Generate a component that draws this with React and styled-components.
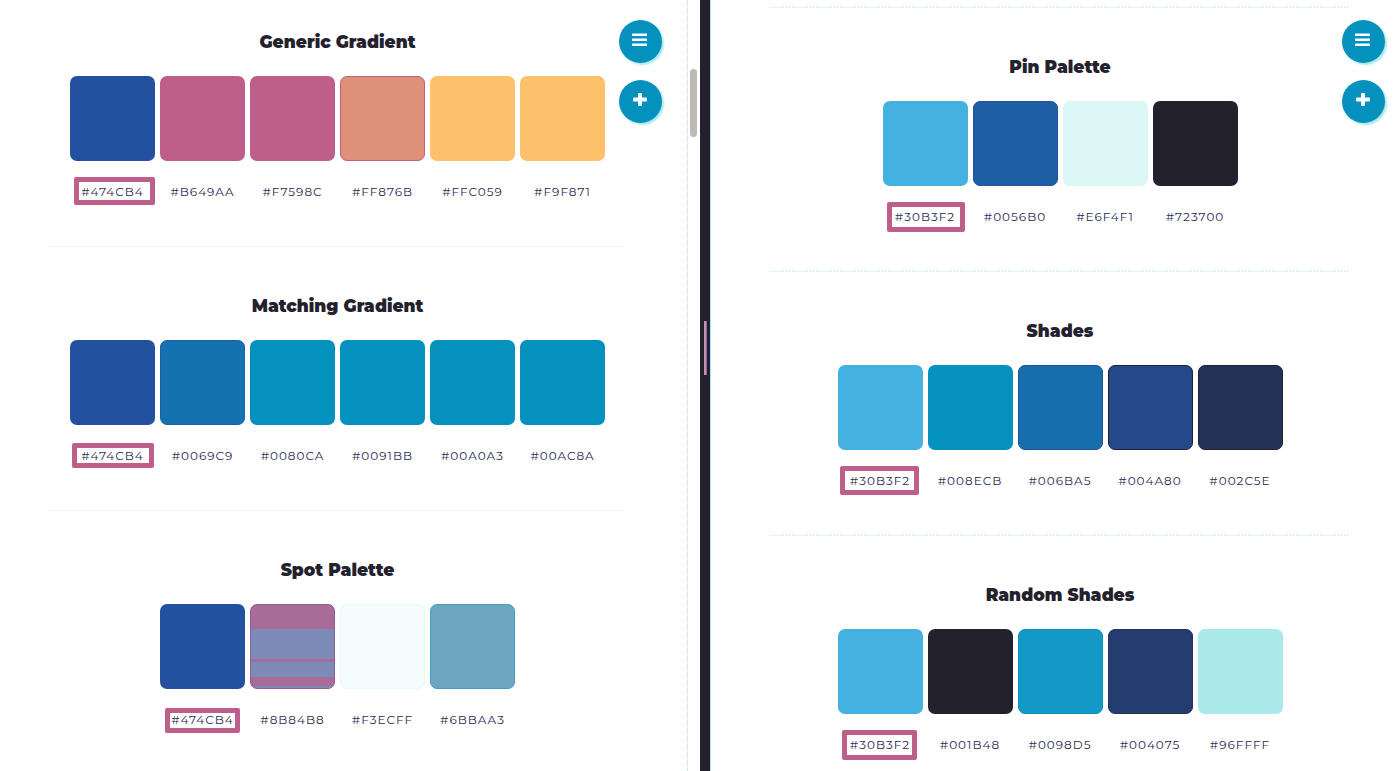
import React from "react";
import styled, { createGlobalStyle } from "styled-components";

const color = {
  ink: "#23212e",
  navy: "#24519f",
  pink: "#be5e8b",
  orange: "#fec16b",
  teal: "#0491be",
  sky: "#45b1e0",
  mist: "#a9e9ea",
};

const GlobalStyle = createGlobalStyle`
  *, *::before, *::after { box-sizing: border-box; }
  body { margin: 0; background: #fff; }
`;

const Split = styled.main`
  display: grid;
  grid-template-columns: 50% 11px minmax(0, 1fr);
  height: 100vh;
  overflow: hidden;
  background: #fff;
  color: ${color.ink};
  font-family: Montserrat, Inter, "Liberation Sans", sans-serif;
`;

const Pane = styled.div`
  position: relative;
  display: flex;
  min-width: 0;
  overflow: hidden;
`;

const Content = styled.div`
  flex: 1;
  min-width: 0;
  padding: ${(p) => p.$padding};
`;

const Rule = styled.hr`
  height: 1px;
  margin: 0;
  border: 0;
  background: repeating-linear-gradient(
    90deg,
    ${color.mist} 0 1px,
    transparent 1px ${(p) => p.$step}px
  );
`;

const Section = styled.section`
  display: flex;
  flex-direction: column;
  align-items: center;
  padding: ${(p) => (p.$scrolled ? 30 : 47)}px 0 41px;
`;

const Title = styled.h2`
  margin: 0 0 22px;
  font-size: 17px;
  font-weight: 900;
  line-height: 24px;
  white-space: nowrap;
`;

const Swatches = styled.ul`
  display: flex;
  gap: 5px;
  margin: 0;
  padding: 0;
  list-style: none;
`;

const Swatch = styled.li`
  width: 85px;
`;

const Chip = styled.div`
  height: 85px;
  border: 1px solid ${(p) => p.$edge || "transparent"};
  border-radius: 7px;
  background: ${(p) => p.$fill} border-box;
`;

const Code = styled.div`
  position: relative;
  margin-top: 17px;
  color: #2b2a52;
  font-size: 12px;
  font-weight: 400;
  letter-spacing: 1px;
  line-height: 27px;
  text-align: center;
`;

const Mark = styled.span`
  position: absolute;
  inset: ${(p) => p.$inset};
  border: 5px solid ${color.pink};
  border-radius: 2px;
`;

const Actions = styled.div`
  position: absolute;
  top: 20px;
  right: ${(p) => p.$right}px;
  display: flex;
  flex-direction: column;
  gap: 17px;
`;

const RoundButton = styled.button`
  display: flex;
  align-items: center;
  justify-content: center;
  width: 43px;
  height: 43px;
  padding: 0 1px 4px 0;
  border: 0;
  border-radius: 50%;
  background: ${color.teal};
  box-shadow: 2px 2px 2px ${color.mist};
  color: #fff;
  cursor: pointer;
`;

const Track = styled.div`
  flex: none;
  width: 13px;
  padding: 69px 3px 0;
  background: repeating-linear-gradient(#bfdcdc 0 1px, transparent 1px 2px) 0 0 / 1px 100% no-repeat;
`;

const Thumb = styled.div`
  width: 7px;
  height: 68px;
  border-radius: 4px;
  background: #bdb9b5;
`;

const Divider = styled.div`
  display: flex;
  align-items: center;
  justify-content: center;
  padding-bottom: 76px;
  border-right: 1px solid ${color.mist};
  background: ${color.ink};
`;

const Grip = styled.span`
  width: 3px;
  height: 54px;
  border-right: 1px solid #5878c4;
  background: #d68aa8;
`;

const MenuIcon = () => (
  <svg width="16" height="14" viewBox="0 0 16 14" aria-hidden="true">
    <g fill="currentColor">
      <rect x="0" y="0.500" width="15" height="2.400" rx="0.600" />
      <rect x="0" y="5.500" width="15" height="2.400" rx="0.600" />
      <rect x="0" y="10.500" width="15" height="2.400" rx="0.600" />
    </g>
  </svg>
);

const PlusIcon = () => (
  <svg width="14" height="14" viewBox="0 0 14 14" aria-hidden="true">
    <path
      d="M6 0h2a1 1 0 0 1 1 1v3.500h4a1 1 0 0 1 1 1v2a1 1 0 0 1-1 1H9V12a1 1 0 0 1-1 1H6a1 1 0 0 1-1-1V8.500H1a1 1 0 0 1-1-1v-2a1 1 0 0 1 1-1h4V1a1 1 0 0 1 1-1Z"
      fill="currentColor"
    />
  </svg>
);

const banded =
  "linear-gradient(#a96b97 0 25px, #7d8bb8 25px 55px, #a96b97 55px 58px, #7d8bb8 58px 73px, #a96b97 73px 82px, #7d8bb8 82px)";

const leftPalettes = [
  {
    name: "Generic Gradient",
    mark: "-1px 0 0 4px",
    swatches: [
      ["#474CB4", color.navy],
      ["#B649AA", color.pink],
      ["#F7598C", color.pink],
      ["#FF876B", "#df9079", color.pink],
      ["#FFC059", color.orange],
      ["#F9F871", color.orange],
    ],
  },
  {
    name: "Matching Gradient",
    mark: "1px 1px 1px 2px",
    swatches: [
      ["#474CB4", color.navy],
      ["#0069C9", "#1473af", "#1c5fa6"],
      ["#0080CA", color.teal],
      ["#0091BB", color.teal],
      ["#00A0A3", color.teal],
      ["#00AC8A", color.teal],
    ],
  },
  {
    name: "Spot Palette",
    mark: "2px 5px 0 5px",
    swatches: [
      ["#474CB4", color.navy],
      ["#8B84B8", banded, "#8a5f91"],
      ["#F3ECFF", "#f4fcfc", "#e6f9f9"],
      ["#6BBAA3", "#6ea6bf", "#409ecb"],
    ],
  },
];

const rightPalettes = [
  {
    name: "Pin Palette",
    mark: "-1px 3px -2px 4px",
    swatches: [
      ["#30B3F2", color.sky],
      ["#0056B0", "#1e5ea5", color.navy],
      ["#E6F4F1", "#ddf7f7"],
      ["#723700", color.ink],
    ],
  },
  {
    name: "Shades",
    mark: "-1px 4px -1px 2px",
    swatches: [
      ["#30B3F2", color.sky],
      ["#008ECB", color.teal],
      ["#006BA5", "#166eac", color.navy],
      ["#004A80", "#24488a", color.ink],
      ["#002C5E", "#233257", color.ink],
    ],
  },
  {
    name: "Random Shades",
    mark: "-1px 6px -2px 4px",
    swatches: [
      ["#30B3F2", color.sky],
      ["#001B48", color.ink],
      ["#0098D5", "#1499c7", color.teal],
      ["#004075", "#243c6f", "#233257"],
      ["#96FFFF", color.mist],
    ],
  },
];

function Palette({ palette, scrolled, step }) {
  return (
    <>
      <Section $scrolled={scrolled}>
        <Title>{palette.name}</Title>
        <Swatches>
          {palette.swatches.map(([code, fill, edge], i) => (
            <Swatch key={code}>
              <Chip $fill={fill} $edge={edge} />
              <Code>
                {code}
                {i === 0 && <Mark $inset={palette.mark} />}
              </Code>
            </Swatch>
          ))}
        </Swatches>
      </Section>
      <Rule $step={step} />
    </>
  );
}

function FloatingActions({ right }) {
  return (
    <Actions $right={right}>
      <RoundButton type="button" aria-label="Menu">
        <MenuIcon />
      </RoundButton>
      <RoundButton type="button" aria-label="Add">
        <PlusIcon />
      </RoundButton>
    </Actions>
  );
}

export default function App() {
  return (
    <>
      <GlobalStyle />
      <Split>
        <Pane>
          <Content $padding="0 62px 0 50px">
            {leftPalettes.map((p, i) => (
              <Palette key={p.name} palette={p} scrolled={i === 0} step={4} />
            ))}
          </Content>
          <Track>
            <Thumb />
          </Track>
          <FloatingActions right={38} />
        </Pane>
        <Divider>
          <Grip />
        </Divider>
        <Pane>
          <Content $padding="7px 51px 0 60px">
            <Rule $step={3} />
            {rightPalettes.map((p) => (
              <Palette key={p.name} palette={p} step={3} />
            ))}
          </Content>
          <FloatingActions right={15} />
        </Pane>
      </Split>
    </>
  );
}
